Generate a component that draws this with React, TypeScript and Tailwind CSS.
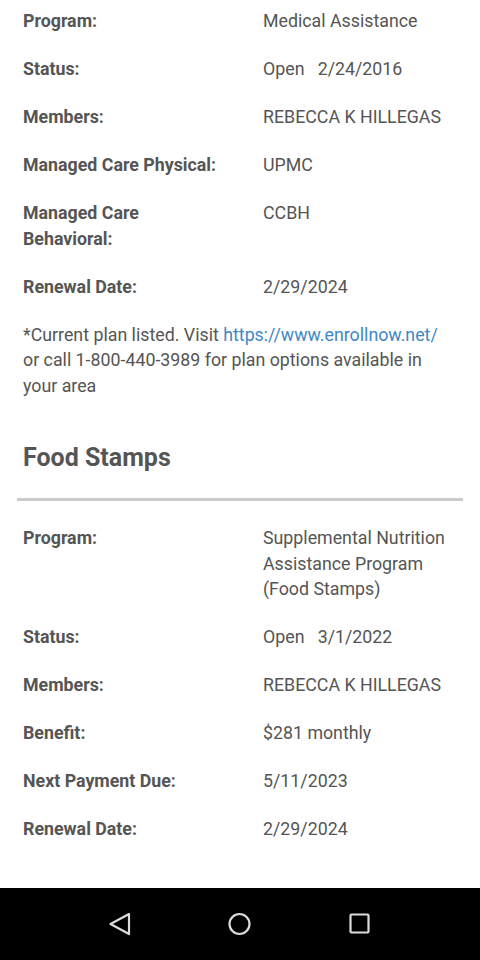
import React from "react";

interface Row {
  label: string;
  value: React.ReactNode;
}

const medical: Row[] = [
  { label: "Program:", value: "Medical Assistance" },
  { label: "Status:", value: <>Open&nbsp;&nbsp;&nbsp;2/24/2016</> },
  { label: "Members:", value: "REBECCA K HILLEGAS" },
  { label: "Managed Care Physical:", value: "UPMC" },
  { label: "Managed Care Behavioral:", value: "CCBH" },
  { label: "Renewal Date:", value: "2/29/2024" },
];

const food: Row[] = [
  {
    label: "Program:",
    value: "Supplemental Nutrition Assistance Program (Food Stamps)",
  },
  { label: "Status:", value: <>Open&nbsp;&nbsp;&nbsp;3/1/2022</> },
  { label: "Members:", value: "REBECCA K HILLEGAS" },
  { label: "Benefit:", value: "$281 monthly" },
  { label: "Next Payment Due:", value: "5/11/2023" },
  { label: "Renewal Date:", value: "2/29/2024" },
];

const DetailRow = ({ row }: { row: Row }) => (
  <div className="flex mb-[22.5px]">
    <div className="w-[240px] shrink-0 pr-[40px] font-bold">{row.label}</div>
    <div className="w-[196px]">{row.value}</div>
  </div>
);

const NavBar = () => (
  <div className="h-[72px] bg-black flex items-center justify-center">
    <svg width="480" height="72" viewBox="0 0 480 72" fill="none">
      <path
        d="M129 26 L110.5 36 L129 46 Z"
        stroke="#dcdcdc"
        strokeWidth="2.2"
        strokeLinejoin="round"
      />
      <circle cx="239.5" cy="36" r="10" stroke="#dcdcdc" strokeWidth="2.2" />
      <rect
        x="350.5"
        y="26.5"
        width="18"
        height="18"
        rx="1"
        stroke="#dcdcdc"
        strokeWidth="2.2"
      />
    </svg>
  </div>
);

function App() {
  return (
    <div
      className="w-[480px] h-[960px] bg-white flex flex-col text-[#555555] text-[17.8px] leading-[25.5px]"
      style={{ fontFamily: "Roboto, 'Liberation Sans', sans-serif" }}
    >
      <div className="flex-1 overflow-hidden">
        <div className="px-[23px] pt-[8px]">
          {medical.map((row) => (
            <DetailRow key={row.label} row={row} />
          ))}
          <p className="mt-0">
            *Current plan listed. Visit{" "}
            <a href="#" className="text-[#4087c8]">
              https://www.enrollnow.net/
            </a>{" "}
            or call 1-800-440-3989 for plan options available in your area
          </p>
        </div>
        <div className="px-[17px]">
          <h2 className="px-[6px] mt-[44px] text-[25px] leading-[32px] font-bold">
            Food Stamps
          </h2>
          <div className="mt-[24px] h-[3px] bg-[#cccccc]" />
        </div>
        <div className="px-[23px] pt-[24px]">
          {food.map((row) => (
            <DetailRow key={row.label} row={row} />
          ))}
        </div>
      </div>
      <NavBar />
    </div>
  );
}

export default App;
